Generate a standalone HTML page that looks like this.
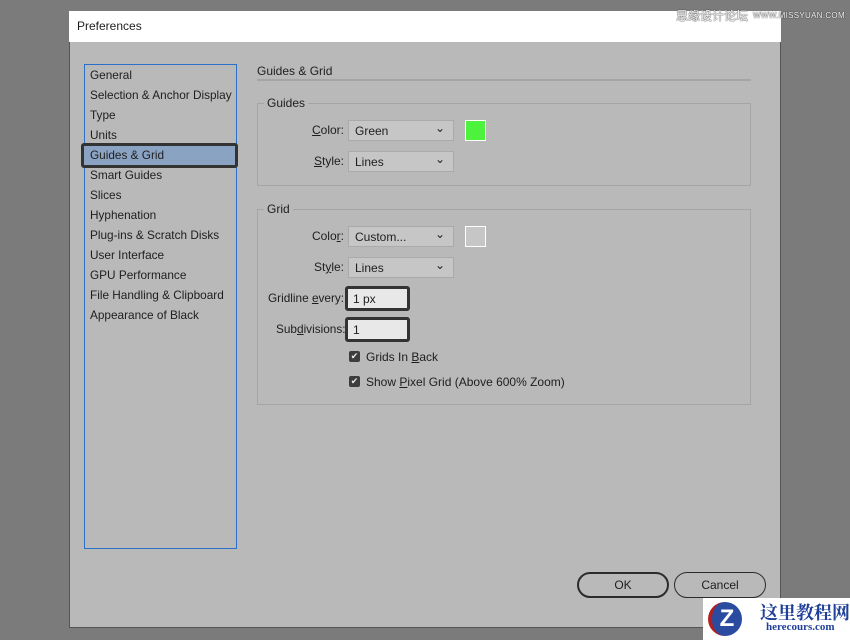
<!DOCTYPE html>
<html><head><style>
body{margin:0;width:850px;height:640px;background:#7b7b7b;position:relative;overflow:hidden;font-family:"Liberation Sans",Arial,sans-serif;font-size:12px;color:#1e1e1e}
.a{position:absolute}
.dlg{left:69px;top:11px;width:712px;height:617px;background:#b9b9b9;border:1px solid #555;box-sizing:border-box}
.title{left:69px;top:11px;width:712px;height:31px;background:#fff}
.list{left:84px;top:64px;width:153px;height:485px;border:1px solid #2a6fc9;box-sizing:border-box}
.li{position:absolute;left:90px;font-size:11.8px}
.grp{border:1px solid #a5a5a5;box-sizing:border-box}
.lbl{background:#b9b9b9;padding:0 3px}
.sel{background:#c6c6c6;border:1px solid #aaa;box-sizing:border-box;height:21px;padding:3px 6px;font-size:12px}
.sel:after{content:"⌄";position:absolute;right:8px;top:0px;font-size:12px}
.rl{text-align:right;font-size:12px}
.inp{background:#e8e8e8;border:3px solid #333;border-radius:3px;box-sizing:border-box;height:25px;padding:3px 5px;font-size:12px}
.cb{width:11px;height:11px;background:#3d3d3d;border-radius:2px;color:#eee;font-size:9px;line-height:11px;text-align:center}
.btn{border:2px solid #2b2b2b;border-radius:13px;box-sizing:border-box;height:26px;text-align:center;line-height:22px;font-size:12px}
u{text-decoration:underline}
.wm{color:#f4f4f4;text-shadow:0 0 1px #333,0 0 1px #333}
</style></head><body>
<div class="a dlg"></div>
<div class="a title"></div>
<div class="a" style="left:77px;top:19px;font-size:12px">Preferences</div>
<div class="a wm" style="left:676px;top:7px;font-size:12px;font-family:'Liberation Sans','Noto Sans CJK SC',sans-serif">思缘设计论坛</div>
<div class="a wm" style="left:753px;top:11px;font-size:8px;letter-spacing:0.3px">WWW.MISSYUAN.COM</div>
<div class="a list"></div>
<div class="a" style="left:81px;top:143px;width:157px;height:25px;background:#8ba3c2;border:3px solid #333;border-radius:3px;box-sizing:border-box"></div>
<div class="li" style="top:68px">General</div>
<div class="li" style="top:88px">Selection &amp; Anchor Display</div>
<div class="li" style="top:108px">Type</div>
<div class="li" style="top:128px">Units</div>
<div class="li" style="top:148px">Guides &amp; Grid</div>
<div class="li" style="top:168px">Smart Guides</div>
<div class="li" style="top:188px">Slices</div>
<div class="li" style="top:208px">Hyphenation</div>
<div class="li" style="top:228px">Plug-ins &amp; Scratch Disks</div>
<div class="li" style="top:248px">User Interface</div>
<div class="li" style="top:268px">GPU Performance</div>
<div class="li" style="top:288px">File Handling &amp; Clipboard</div>
<div class="li" style="top:308px">Appearance of Black</div>

<div class="a" style="left:257px;top:64px">Guides &amp; Grid</div>
<div class="a" style="left:257px;top:79px;width:494px;height:2px;background:#a5a5a5"></div>

<div class="a grp" style="left:257px;top:103px;width:494px;height:83px"></div>
<div class="a lbl" style="left:264px;top:96px">Guides</div>
<div class="a rl" style="left:270px;top:123px;width:74px"><u>C</u>olor:</div>
<div class="a sel" style="left:348px;top:120px;width:106px">Green</div>
<div class="a" style="left:465px;top:120px;width:21px;height:21px;background:#4cf23c;border:1px solid #fff;box-sizing:border-box"></div>
<div class="a rl" style="left:270px;top:154px;width:74px"><u>S</u>tyle:</div>
<div class="a sel" style="left:348px;top:151px;width:106px">Lines</div>

<div class="a grp" style="left:257px;top:209px;width:494px;height:196px"></div>
<div class="a lbl" style="left:264px;top:202px">Grid</div>
<div class="a rl" style="left:270px;top:229px;width:74px">Colo<u>r</u>:</div>
<div class="a sel" style="left:348px;top:226px;width:106px">Custom...</div>
<div class="a" style="left:465px;top:226px;width:21px;height:21px;background:#c6c6c6;border:1px solid #fff;box-sizing:border-box"></div>
<div class="a rl" style="left:270px;top:260px;width:74px">St<u>y</u>le:</div>
<div class="a sel" style="left:348px;top:257px;width:106px">Lines</div>
<div class="a" style="left:268px;top:291px;font-size:11.8px">Gridline <u>e</u>very:</div>
<div class="a inp" style="left:345px;top:286px;width:65px">1 px</div>
<div class="a" style="left:276px;top:322px;font-size:11.8px">Sub<u>d</u>ivisions:</div>
<div class="a inp" style="left:345px;top:317px;width:65px">1</div>
<div class="a cb" style="left:349px;top:351px">✔</div>
<div class="a" style="left:366px;top:350px">Grids In <u>B</u>ack</div>
<div class="a cb" style="left:349px;top:376px">✔</div>
<div class="a" style="left:366px;top:375px">Show <u>P</u>ixel Grid (Above 600% Zoom)</div>

<div class="a btn" style="left:577px;top:572px;width:92px">OK</div>
<div class="a btn" style="left:674px;top:572px;width:92px;border-width:1px;line-height:24px">Cancel</div>

<div class="a" style="left:703px;top:598px;width:147px;height:42px;background:#fff"></div>
<div class="a" style="left:708px;top:602px;width:34px;height:34px;border-radius:50%;background:#2a4ba0;color:#fff;font-weight:bold;font-size:24px;text-align:center;line-height:34px;border-left:4px solid #b02020;box-sizing:border-box">Z</div>
<div class="a" style="left:760px;top:599px;font-size:18px;font-weight:bold;color:#1f3f9a;font-family:'Liberation Serif','Noto Serif CJK SC',serif">这里教程网</div>
<div class="a" style="left:766px;top:621px;font-size:11px;font-weight:bold;color:#1f3f9a;font-family:'Liberation Serif',serif">herecours.com</div>
</body></html>
